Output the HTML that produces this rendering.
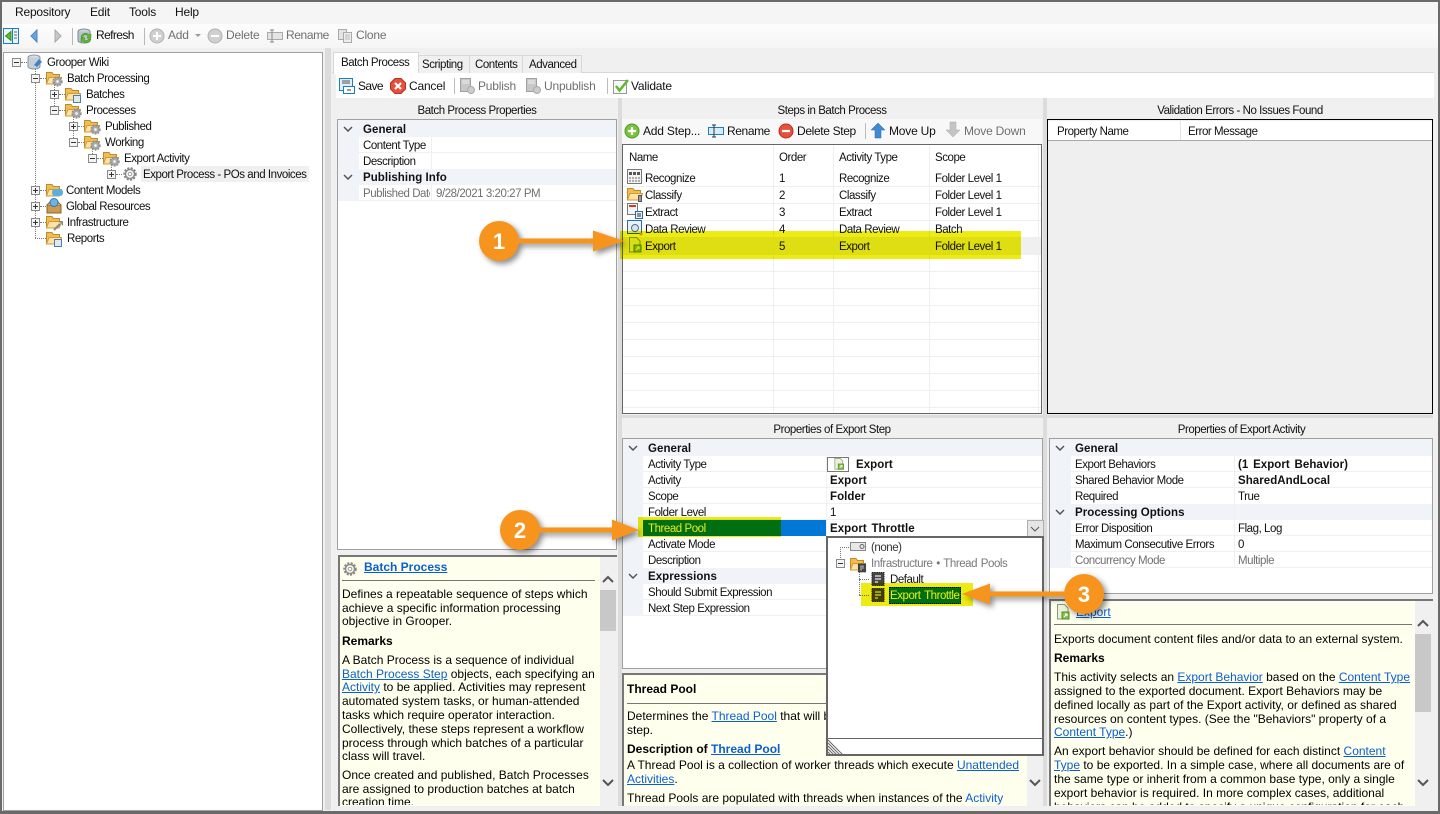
<!DOCTYPE html>
<html><head><meta charset="utf-8"><title>Grooper</title>
<style>
html,body{margin:0;padding:0;width:1440px;height:814px;overflow:hidden;background:#f0f0f0}
.t{position:absolute;white-space:nowrap;font:11.5px/16px "Liberation Sans",sans-serif;letter-spacing:-.45px;color:#111;margin-top:1px}
.t.b{letter-spacing:.05px}
.t.tb{font-size:12px;letter-spacing:-.2px;margin-top:0}
.m{position:absolute;white-space:nowrap;font:12px/14px "Liberation Sans",sans-serif;color:#000;margin-top:1px}
.m a,.a{color:#0a5fd0;text-decoration:underline}
.d{position:absolute}
.g{color:#707070}
.b{font-weight:bold}
svg.i{position:absolute;width:16px;height:16px;overflow:visible}
svg.e{position:absolute;width:9px;height:9px}
.vd{position:absolute;width:0;border-left:1px dotted #777}
.hd{position:absolute;height:0;border-top:1px dotted #777}
</style></head><body>
<svg width="0" height="0" style="position:absolute"><defs>
<symbol id="mn" viewBox="0 0 9 9"><rect x=".5" y=".5" width="8" height="8" fill="#f4f4f4" stroke="#8a8a8a"/><path d="M2 4.5h5" stroke="#333"/></symbol>
<symbol id="pl" viewBox="0 0 9 9"><rect x=".5" y=".5" width="8" height="8" fill="#f4f4f4" stroke="#8a8a8a"/><path d="M2 4.5h5M4.5 2v5" stroke="#333"/></symbol>
<symbol id="fo" viewBox="0 0 16 16"><path d="M.5 14V2.500h5.500l1.500 2h6v3H15.500L13 14z" fill="#f2bd4e" stroke="#c08a2c"/><path d="M3 7.500h12.500L13 14H.5z" fill="#fde4a4" stroke="#d09a3c"/></symbol>
<symbol id="gear" viewBox="0 0 16 16"><circle cx="8" cy="8" r="5.500" fill="none" stroke="#888" stroke-width="2.500" stroke-dasharray="2 1.300"/><circle cx="8" cy="8" r="4.500" fill="none" stroke="#8c8c8c" stroke-width="1.500"/><circle cx="8" cy="8" r="1.800" fill="#fff" stroke="#999"/></symbol>
<symbol id="gr" viewBox="0 0 16 16"><circle cx="8" cy="8" r="6" fill="#a4a4a4" stroke="#909090" stroke-width="3" stroke-dasharray="2.500 1.500"/><circle cx="8" cy="8" r="4.500" fill="#aaa"/><circle cx="8" cy="8" r="2" fill="#f2f2f2"/></symbol>
<symbol id="doc" viewBox="0 0 16 16"><path d="M2.500 .5h7l3.500 3.500v11h-10.500z" fill="#eaf2dc" stroke="#8a9a78"/><rect x="7" y="8" width="7" height="7" fill="#8cc152" stroke="#4f8a1e"/><path d="M9 13l3-3M10 10h2v2" stroke="#fff" fill="none"/></symbol>
<symbol id="dk" viewBox="0 0 16 16"><rect x="2" y="1.500" width="12" height="13" fill="#444" stroke="#222" stroke-dasharray="1.500 .7"/><path d="M5 5h6M5 8h6M5 11h3" stroke="#eee" stroke-width="1.200"/></symbol>
</defs></svg>

<!-- frame + chrome -->
<div class="d" style="left:0;top:0;width:1440px;height:24px;background:#f5f5f5"></div>
<div class="d" style="left:0;top:24px;width:1440px;height:24px;background:linear-gradient(#fdfdfd,#f5f5f5)"></div>
<div class="d" style="left:0;top:48px;width:331px;height:766px;background:#f0f0f0"></div>
<div class="d" style="left:325px;top:48px;width:6px;height:762px;background:#dcdcdc"></div>

<span class="t tb" style="left:15px;top:4px">Repository</span>
<span class="t tb" style="left:90px;top:4px">Edit</span>
<span class="t tb" style="left:129px;top:4px">Tools</span>
<span class="t tb" style="left:175px;top:4px">Help</span>

<!-- main toolbar -->
<svg class="i" style="left:3px;top:28px" viewBox="0 0 16 16"><rect x=".5" y=".5" width="15" height="15" fill="#e8f4fc" stroke="#1a7fc4"/><path d="M9.500 1v14" stroke="#1a7fc4"/><path d="M8 3.500L2.500 8 8 12.500z" fill="#5fb82e" stroke="#3c8c16"/><path d="M11 4h3M11 7h3M11 10h3" stroke="#666"/></svg>
<svg class="i" style="left:26px;top:28px" viewBox="0 0 16 16"><path d="M11 2L5 8l6 6z" fill="#6aa6dc" stroke="#4a86bc"/></svg>
<svg class="i" style="left:50px;top:28px" viewBox="0 0 16 16"><path d="M5 2l6 6-6 6z" fill="#c8c8c8" stroke="#a8a8a8"/></svg>
<div class="d" style="left:72px;top:28px;width:1px;height:17px;background:#b8b8b8"></div>
<svg class="i" style="left:77px;top:28px" viewBox="0 0 16 16"><ellipse cx="7" cy="3.500" rx="6" ry="2.500" fill="#cdd6de" stroke="#7f8a94"/><path d="M1 3.500v9c0 1.400 2.700 2.500 6 2.500s6-1.100 6-2.500v-9" fill="#b7c2cc" stroke="#7f8a94"/><path d="M4 9a4.500 4.500 0 0 1 8-2l2-1v4h-4l1-1.500A2.500 2.500 0 0 0 6 10zM14 11a4.500 4.500 0 0 1-8 2l-2 1v-4h4l-1 1.500A2.500 2.500 0 0 0 11.500 11z" fill="#5fb82e" stroke="#3c8c16" stroke-width=".5"/></svg>
<span class="t tb" style="left:96px;top:27px;letter-spacing:-.6px">Refresh</span>
<div class="d" style="left:144px;top:28px;width:1px;height:17px;background:#b8b8b8"></div>
<svg class="i" style="left:149px;top:28px" viewBox="0 0 16 16"><circle cx="8" cy="8" r="7" fill="#d0d0d0" stroke="#b0b0b0"/><path d="M8 4v8M4 8h8" stroke="#fff" stroke-width="2"/></svg>
<span class="t tb g" style="left:168px;top:27px">Add</span>
<svg class="d" style="left:195px;top:34px" width="7" height="4"><path d="M0 0h6L3 3z" fill="#999"/></svg>
<svg class="i" style="left:207px;top:28px" viewBox="0 0 16 16"><circle cx="8" cy="8" r="7" fill="#d0d0d0" stroke="#b0b0b0"/><path d="M4 8h8" stroke="#fff" stroke-width="2"/></svg>
<span class="t tb g" style="left:226px;top:27px">Delete</span>
<svg class="i" style="left:267px;top:28px" viewBox="0 0 16 16"><rect x=".5" y="4.500" width="15" height="7" fill="#e4e4e4" stroke="#aaa"/><path d="M5 2v12M3 2h4M3 14h4" stroke="#888" fill="none"/></svg>
<span class="t tb g" style="left:286px;top:27px;letter-spacing:-.4px">Rename</span>
<svg class="i" style="left:337px;top:28px" viewBox="0 0 16 16"><rect x="1.500" y="1.500" width="8" height="10" fill="#e4e4e4" stroke="#aaa"/><rect x="6.500" y="4.500" width="8" height="10" fill="#eee" stroke="#aaa"/><path d="M8 7h5M8 9h5M8 11h5" stroke="#bbb"/></svg>
<span class="t tb g" style="left:356px;top:27px">Clone</span>

<!-- tree panel -->
<div class="d" style="left:3px;top:52px;width:318px;height:757px;background:#fff;border:1px solid #a0a0a0"></div>
<div class="vd" style="left:35px;top:68px;height:170px"></div>
<div class="vd" style="left:54px;top:84px;height:26px"></div>
<div class="vd" style="left:73px;top:116px;height:26px"></div>
<div class="vd" style="left:92px;top:148px;height:10px"></div>
<div class="vd" style="left:111px;top:164px;height:10px"></div>
<div class="hd" style="left:21px;top:62px;width:6px"></div>
<div class="hd" style="left:40px;top:78px;width:6px"></div>
<div class="hd" style="left:59px;top:94px;width:6px"></div>
<div class="hd" style="left:59px;top:110px;width:6px"></div>
<div class="hd" style="left:78px;top:126px;width:6px"></div>
<div class="hd" style="left:78px;top:142px;width:6px"></div>
<div class="hd" style="left:97px;top:158px;width:6px"></div>
<div class="hd" style="left:116px;top:174px;width:6px"></div>
<div class="hd" style="left:40px;top:190px;width:6px"></div>
<div class="hd" style="left:40px;top:206px;width:6px"></div>
<div class="hd" style="left:40px;top:222px;width:6px"></div>
<div class="hd" style="left:35px;top:238px;width:11px"></div>
<svg class="e" style="left:12px;top:58px"><use href="#mn"/></svg>
<svg class="e" style="left:31px;top:74px"><use href="#mn"/></svg>
<svg class="e" style="left:50px;top:90px"><use href="#pl"/></svg>
<svg class="e" style="left:50px;top:106px"><use href="#mn"/></svg>
<svg class="e" style="left:69px;top:122px"><use href="#pl"/></svg>
<svg class="e" style="left:69px;top:138px"><use href="#mn"/></svg>
<svg class="e" style="left:88px;top:154px"><use href="#mn"/></svg>
<svg class="e" style="left:107px;top:170px"><use href="#pl"/></svg>
<svg class="e" style="left:31px;top:186px"><use href="#pl"/></svg>
<svg class="e" style="left:31px;top:202px"><use href="#pl"/></svg>
<svg class="e" style="left:31px;top:218px"><use href="#pl"/></svg>
<svg class="i" style="left:27px;top:54px" viewBox="0 0 16 16"><ellipse cx="7" cy="3.500" rx="6" ry="2.500" fill="#d8dee4" stroke="#8a949e"/><path d="M1 3.500v9c0 1.400 2.700 2.500 6 2.500s6-1.100 6-2.500v-9" fill="#c6ced6" stroke="#8a949e"/><path d="M7 11l5-6 3 3-5 5z" fill="#3f84c6"/></svg>
<svg class="i" style="left:46px;top:70px"><use href="#fo"/></svg><svg class="i" style="left:52px;top:76px;width:11px;height:11px"><use href="#gr"/></svg>
<svg class="i" style="left:65px;top:86px"><use href="#fo"/></svg><div class="d" style="left:73px;top:95px;width:8px;height:8px;background:#dfe9f3;border:1px solid #4a7fae;box-sizing:border-box"></div>
<svg class="i" style="left:65px;top:102px"><use href="#fo"/></svg><svg class="i" style="left:71px;top:108px;width:11px;height:11px"><use href="#gr"/></svg>
<svg class="i" style="left:84px;top:118px"><use href="#fo"/></svg><svg class="i" style="left:90px;top:124px;width:11px;height:11px"><use href="#gr"/></svg>
<svg class="i" style="left:84px;top:134px"><use href="#fo"/></svg><svg class="i" style="left:90px;top:140px;width:11px;height:11px"><use href="#gr"/></svg>
<svg class="i" style="left:103px;top:150px"><use href="#fo"/></svg><svg class="i" style="left:109px;top:156px;width:11px;height:11px"><use href="#gr"/></svg>
<div class="d" style="left:141px;top:166px;width:168px;height:16px;background:#f0f0f0"></div>
<svg class="i" style="left:122px;top:166px"><use href="#gear"/></svg>
<svg class="i" style="left:46px;top:182px"><use href="#fo"/></svg><div class="d" style="left:52px;top:189px;width:11px;height:7px;background:#5fb0d8;border-radius:3px"></div>
<svg class="i" style="left:46px;top:198px" viewBox="0 0 16 16"><rect x="1" y="7" width="14" height="8" fill="#c99a52" stroke="#8a6426"/><path d="M1 7l3-3h8l3 3" fill="#e0b878" stroke="#8a6426"/><circle cx="8" cy="4.500" r="4" fill="#6fb4e6" stroke="#2f78b4"/></svg>
<svg class="i" style="left:46px;top:214px"><use href="#fo"/></svg><svg class="d" style="left:53px;top:221px" width="10" height="10"><path d="M1 9l6-6M6 1a2 2 0 0 1 3 3" stroke="#888" stroke-width="2" fill="none"/></svg>
<svg class="i" style="left:46px;top:230px"><use href="#fo"/></svg><div class="d" style="left:54px;top:239px;width:8px;height:8px;background:#dfe9f3;border:1px solid #4a7fae;box-sizing:border-box"></div>
<span class="t" style="left:47px;top:54px">Grooper Wiki</span>
<span class="t" style="left:67px;top:70px">Batch Processing</span>
<span class="t" style="left:86px;top:86px">Batches</span>
<span class="t" style="left:86px;top:102px">Processes</span>
<span class="t" style="left:105px;top:118px">Published</span>
<span class="t" style="left:105px;top:134px">Working</span>
<span class="t" style="left:124px;top:150px">Export Activity</span>
<span class="t" style="left:143px;top:166px">Export Process - POs and Invoices</span>
<span class="t" style="left:66px;top:182px">Content Models</span>
<span class="t" style="left:66px;top:198px">Global Resources</span>
<span class="t" style="left:67px;top:214px">Infrastructure</span>
<span class="t" style="left:67px;top:230px">Reports</span>

<!-- tabs -->
<div class="d" style="left:332px;top:72px;width:1102px;height:1px;background:#d8d8d8"></div>
<div class="d" style="left:418px;top:55px;width:51px;height:17px;background:#f0f0f0;border:1px solid #d8d8d8;border-bottom:0"></div>
<div class="d" style="left:469px;top:55px;width:53px;height:17px;background:#f0f0f0;border:1px solid #d8d8d8;border-bottom:0"></div>
<div class="d" style="left:522px;top:55px;width:58px;height:17px;background:#f0f0f0;border:1px solid #d8d8d8;border-bottom:0"></div>
<div class="d" style="left:333px;top:52px;width:84px;height:21px;background:#fff;border:1px solid #d8d8d8;border-bottom:0"></div>
<span class="t" style="left:341px;top:54px">Batch Process</span>
<span class="t" style="left:422px;top:56px">Scripting</span>
<span class="t" style="left:475px;top:56px">Contents</span>
<span class="t" style="left:529px;top:56px">Advanced</span>

<!-- content toolbar -->
<div class="d" style="left:336px;top:73px;width:1098px;height:25px;background:#fff"></div>
<svg class="i" style="left:339px;top:78px" viewBox="0 0 16 16"><rect x=".5" y=".5" width="13" height="12" fill="#dff0fb" stroke="#1a7fc4"/><path d="M3 3h8M3 5h8" stroke="#555"/><rect x="4.500" y="8.500" width="11" height="7" fill="#fff" stroke="#1a7fc4"/><path d="M8 12h4" stroke="#333"/></svg>
<span class="t tb" style="left:358px;top:78px;letter-spacing:-.6px">Save</span>
<svg class="i" style="left:390px;top:78px" viewBox="0 0 16 16"><path d="M5 .5h6L15.500 5v6L11 15.500H5L.5 11V5z" fill="#e8503e" stroke="#b82d1e"/><path d="M5 5l6 6M11 5l-6 6" stroke="#fff" stroke-width="2.200"/></svg>
<span class="t tb" style="left:409px;top:78px">Cancel</span>
<div class="d" style="left:454px;top:78px;width:1px;height:16px;background:#bcbcbc"></div>
<svg class="i" style="left:459px;top:78px" viewBox="0 0 16 16"><rect x="1.500" y=".5" width="10" height="13" fill="#c8c8c8" stroke="#a0a0a0"/><path d="M3 3h7M3 5h7" stroke="#eee"/><circle cx="12" cy="12" r="3.500" fill="#ccc" stroke="#aaa"/></svg>
<span class="t tb g" style="left:478px;top:78px">Publish</span>
<svg class="i" style="left:525px;top:78px" viewBox="0 0 16 16"><rect x="1.500" y=".5" width="10" height="13" fill="#c8c8c8" stroke="#a0a0a0"/><path d="M3 3h7M3 5h7" stroke="#eee"/><circle cx="12" cy="12" r="3.500" fill="#ccc" stroke="#aaa"/></svg>
<span class="t tb g" style="left:544px;top:78px">Unpublish</span>
<div class="d" style="left:607px;top:78px;width:1px;height:16px;background:#bcbcbc"></div>
<svg class="i" style="left:613px;top:78px" viewBox="0 0 16 16"><rect x=".5" y="2.500" width="13" height="13" fill="#fafafa" stroke="#999"/><path d="M3 8l3.500 4.500L15 2" fill="none" stroke="#5fb82e" stroke-width="2.500"/></svg>
<span class="t tb" style="left:631px;top:78px">Validate</span>

<!-- splitter colors -->
<div class="d" style="left:618px;top:98px;width:4px;height:708px;background:#dcdcdc"></div>
<div class="d" style="left:1043px;top:98px;width:4px;height:708px;background:#dcdcdc"></div>
<div class="d" style="left:622px;top:415px;width:811px;height:3px;background:#dcdcdc"></div>

<!-- left properties -->
<span class="t" style="left:337px;top:102px;width:280px;text-align:center">Batch Process Properties</span>
<div class="d" style="left:337px;top:119px;width:278px;height:429px;background:#fff;border:1px solid #a0a0a0"></div>
<div class="d" style="left:338px;top:120px;width:21px;height:81px;background:#f0f4f9"></div>
<div class="d" style="left:338px;top:120px;width:278px;height:17px;background:#f0f4f9"></div>
<div class="d" style="left:338px;top:169px;width:278px;height:16px;background:#f0f4f9"></div>
<div class="d" style="left:359px;top:152px;width:257px;height:1px;background:#f0f0f0"></div>
<div class="d" style="left:359px;top:200px;width:257px;height:1px;background:#f0f0f0"></div>
<div class="d" style="left:431px;top:137px;width:1px;height:32px;background:#f0f0f0"></div>
<div class="d" style="left:431px;top:185px;width:1px;height:16px;background:#f0f0f0"></div>
<svg class="d" style="left:343px;top:126px" width="10" height="6"><path d="M1 1l4 4 4-4" fill="none" stroke="#555" stroke-width="1.500"/></svg>
<svg class="d" style="left:343px;top:174px" width="10" height="6"><path d="M1 1l4 4 4-4" fill="none" stroke="#555" stroke-width="1.500"/></svg>
<span class="t b" style="left:363px;top:121px">General</span>
<span class="t" style="left:363px;top:137px">Content Type</span>
<span class="t" style="left:363px;top:153px">Description</span>
<span class="t b" style="left:363px;top:169px">Publishing Info</span>
<span class="t g" style="left:363px;top:185px;width:67px;overflow:hidden">Published Date</span>
<span class="t g" style="left:436px;top:185px">9/28/2021 3:20:27 PM</span>

<!-- left help -->
<div class="d" style="left:338px;top:555px;width:279px;height:251px;background:#ffffee;border-top:2px solid #777;border-left:2px solid #777;box-sizing:border-box"></div>
<div class="d" style="left:600px;top:557px;width:17px;height:249px;background:#f0f0f0"></div>
<div class="d" style="left:600px;top:590px;width:16px;height:41px;background:#c8c8c8"></div>
<svg class="d" style="left:602px;top:575px" width="12" height="9"><path d="M1 7l5-5 5 5" fill="none" stroke="#555" stroke-width="2"/></svg>
<svg class="d" style="left:602px;top:778px" width="12" height="9"><path d="M1 2l5 5 5-5" fill="none" stroke="#555" stroke-width="2"/></svg>
<svg class="i" style="left:342px;top:561px"><use href="#gear"/></svg>
<span class="m b" style="left:364px;top:559px"><a>Batch Process</a></span>
<div class="d" style="left:342px;top:580px;width:253px;height:1px;background:#777"></div>
<span class="m" style="left:342px;top:586px">Defines a repeatable sequence of steps which</span>
<span class="m" style="left:342px;top:600px">achieve a specific information processing</span>
<span class="m" style="left:342px;top:613px">objective in Grooper.</span>
<span class="m b" style="left:342px;top:633px">Remarks</span>
<span class="m" style="left:342px;top:652px">A Batch Process is a sequence of individual</span>
<span class="m" style="left:342px;top:666px"><a>Batch Process Step</a> objects, each specifying an</span>
<span class="m" style="left:342px;top:679px"><a>Activity</a> to be applied. Activities may represent</span>
<span class="m" style="left:342px;top:693px">automated system tasks, or human-attended</span>
<span class="m" style="left:342px;top:707px">tasks which require operator interaction.</span>
<span class="m" style="left:342px;top:721px">Collectively, these steps represent a workflow</span>
<span class="m" style="left:342px;top:735px">process through which batches of a particular</span>
<span class="m" style="left:342px;top:748px">class will travel.</span>
<span class="m" style="left:342px;top:767px">Once created and published, Batch Processes</span>
<span class="m" style="left:342px;top:781px">are assigned to production batches at batch</span>
<span class="m" style="left:342px;top:794px;height:10px;overflow:hidden">creation time.</span>

<!-- steps -->
<span class="t" style="left:622px;top:102px;width:420px;text-align:center">Steps in Batch Process</span>
<div class="d" style="left:622px;top:119px;width:420px;height:25px;background:#f8f8f8"></div>
<svg class="i" style="left:624px;top:123px" viewBox="0 0 16 16"><circle cx="8" cy="8" r="7" fill="#7cc242" stroke="#4f9a1e"/><path d="M8 4v8M4 8h8" stroke="#fff" stroke-width="2.200"/></svg>
<span class="t tb" style="left:643px;top:123px">Add Step...</span>
<svg class="i" style="left:708px;top:123px" viewBox="0 0 16 16"><rect x=".5" y="4.500" width="15" height="7" fill="#d6ecfa" stroke="#1a7fc4"/><path d="M6 2v12M4 2h4M4 14h4" stroke="#333" fill="none"/></svg>
<span class="t tb" style="left:727px;top:123px;letter-spacing:-.4px">Rename</span>
<svg class="i" style="left:778px;top:123px" viewBox="0 0 16 16"><circle cx="8" cy="8" r="7" fill="#e8503e" stroke="#b82d1e"/><path d="M4 8h8" stroke="#fff" stroke-width="2.200"/></svg>
<span class="t tb" style="left:797px;top:123px;letter-spacing:-.35px">Delete Step</span>
<div class="d" style="left:865px;top:123px;width:1px;height:16px;background:#bcbcbc"></div>
<svg class="i" style="left:870px;top:122px" viewBox="0 0 16 16"><path d="M8 1l7 7h-4v8H5V8H1z" fill="#3f8ad0" stroke="#2a6aa6" stroke-width=".5"/></svg>
<span class="t tb" style="left:889px;top:123px">Move Up</span>
<svg class="i" style="left:945px;top:122px" viewBox="0 0 16 16"><path d="M8 15l7-7h-4V0H5v8H1z" fill="#c4c4c4" stroke="#aaa" stroke-width=".5"/></svg>
<span class="t tb g" style="left:964px;top:123px">Move Down</span>

<div class="d" style="left:622px;top:144px;width:418px;height:268px;background:#fff;border:1px solid #666"></div>
<div class="d" style="left:623px;top:237px;width:418px;height:17px;background:#f0f0f0"></div>
<div class="d" style="left:623px;top:186px;width:418px;height:1px;background:#efefef"></div>
<div class="d" style="left:623px;top:203px;width:418px;height:1px;background:#efefef"></div>
<div class="d" style="left:623px;top:220px;width:418px;height:1px;background:#efefef"></div>
<div class="d" style="left:623px;top:237px;width:418px;height:1px;background:#efefef"></div>
<div class="d" style="left:623px;top:254px;width:418px;height:1px;background:#efefef"></div>
<div class="d" style="left:623px;top:271px;width:418px;height:1px;background:#efefef"></div>
<div class="d" style="left:623px;top:288px;width:418px;height:1px;background:#efefef"></div>
<div class="d" style="left:623px;top:305px;width:418px;height:1px;background:#efefef"></div>
<div class="d" style="left:623px;top:322px;width:418px;height:1px;background:#efefef"></div>
<div class="d" style="left:623px;top:339px;width:418px;height:1px;background:#efefef"></div>
<div class="d" style="left:623px;top:356px;width:418px;height:1px;background:#efefef"></div>
<div class="d" style="left:623px;top:373px;width:418px;height:1px;background:#efefef"></div>
<div class="d" style="left:623px;top:390px;width:418px;height:1px;background:#efefef"></div>
<div class="d" style="left:623px;top:407px;width:418px;height:1px;background:#efefef"></div>
<div class="d" style="left:773px;top:145px;width:1px;height:268px;background:#efefef"></div>
<div class="d" style="left:833px;top:145px;width:1px;height:268px;background:#efefef"></div>
<div class="d" style="left:929px;top:145px;width:1px;height:268px;background:#efefef"></div>
<div class="d" style="left:1038px;top:145px;width:1px;height:268px;background:#efefef"></div>
<span class="t" style="left:629px;top:149px">Name</span><span class="t" style="left:779px;top:149px">Order</span><span class="t" style="left:839px;top:149px">Activity Type</span><span class="t" style="left:935px;top:149px">Scope</span>
<svg class="i" style="left:627px;top:169px" viewBox="0 0 16 16"><rect x=".5" y=".5" width="14" height="14" fill="#f4f4f4" stroke="#777"/><path d="M2 4.500h11" stroke="#555" stroke-width="3" stroke-dasharray="3 1"/><path d="M2 9h11M2 12h11" stroke="#666" stroke-dasharray="2 1"/></svg>
<span class="t" style="left:645px;top:170px">Recognize</span><span class="t" style="left:779px;top:170px">1</span><span class="t" style="left:839px;top:170px">Recognize</span><span class="t" style="left:935px;top:170px">Folder Level 1</span>
<svg class="i" style="left:627px;top:186px"><use href="#fo"/></svg><div class="d" style="left:638px;top:195px;width:4px;height:7px;background:#999;border:1px solid #555;box-sizing:border-box"></div>
<span class="t" style="left:645px;top:187px">Classify</span><span class="t" style="left:779px;top:187px">2</span><span class="t" style="left:839px;top:187px">Classify</span><span class="t" style="left:935px;top:187px">Folder Level 1</span>
<svg class="i" style="left:627px;top:203px" viewBox="0 0 16 16"><rect x=".5" y=".5" width="10" height="11" fill="#f4f4f4" stroke="#777"/><path d="M2 3h7" stroke="#d03a2a" stroke-width="2"/><rect x="8.500" y="8.500" width="7" height="7" fill="#e8f2fa" stroke="#2a6aa6"/><path d="M10 11h4M10 13h4" stroke="#333"/></svg>
<span class="t" style="left:645px;top:204px">Extract</span><span class="t" style="left:779px;top:204px">3</span><span class="t" style="left:839px;top:204px">Extract</span><span class="t" style="left:935px;top:204px">Folder Level 1</span>
<svg class="i" style="left:627px;top:220px" viewBox="0 0 16 16"><rect x=".5" y=".5" width="14" height="13" fill="#e8f2fa" stroke="#2a6aa6"/><circle cx="8" cy="8" r="3.500" fill="#cfe8f8" stroke="#668"/><circle cx="14" cy="14" r="1.500" fill="#e89a20"/></svg>
<span class="t" style="left:645px;top:221px">Data Review</span><span class="t" style="left:779px;top:221px">4</span><span class="t" style="left:839px;top:221px">Data Review</span><span class="t" style="left:935px;top:221px">Batch</span>
<svg class="i" style="left:627px;top:237px"><use href="#doc"/></svg>
<span class="t" style="left:645px;top:238px">Export</span><span class="t" style="left:779px;top:238px">5</span><span class="t" style="left:839px;top:238px">Export</span><span class="t" style="left:935px;top:238px">Folder Level 1</span>

<!-- validation -->
<span class="t" style="left:1047px;top:102px;width:386px;text-align:center">Validation Errors - No Issues Found</span>
<div class="d" style="left:1047px;top:119px;width:384px;height:293px;background:#efefef;border:1px solid #000"></div>
<div class="d" style="left:1048px;top:121px;width:384px;height:19px;background:#fff;border-bottom:1px solid #a8a8a8"></div>
<div class="d" style="left:1180px;top:121px;width:1px;height:19px;background:#e4e4e4"></div>
<span class="t" style="left:1057px;top:123px">Property Name</span>
<span class="t" style="left:1188px;top:123px">Error Message</span>

<!-- export step props -->
<span class="t" style="left:622px;top:421px;width:420px;text-align:center">Properties of Export Step</span>
<div class="d" style="left:622px;top:438px;width:419px;height:229px;background:#fff;border:1px solid #a0a0a0"></div>
<div class="d" style="left:623px;top:439px;width:20px;height:177px;background:#f0f4f9"></div>
<div class="d" style="left:623px;top:439px;width:419px;height:17px;background:#f0f4f9"></div>
<div class="d" style="left:623px;top:568px;width:419px;height:16px;background:#f0f4f9"></div>
<div class="d" style="left:643px;top:471px;width:399px;height:1px;background:#f0f0f0"></div>
<div class="d" style="left:643px;top:487px;width:399px;height:1px;background:#f0f0f0"></div>
<div class="d" style="left:643px;top:503px;width:399px;height:1px;background:#f0f0f0"></div>
<div class="d" style="left:643px;top:519px;width:399px;height:1px;background:#f0f0f0"></div>
<div class="d" style="left:643px;top:551px;width:399px;height:1px;background:#f0f0f0"></div>
<div class="d" style="left:643px;top:599px;width:399px;height:1px;background:#f0f0f0"></div>
<div class="d" style="left:643px;top:615px;width:399px;height:1px;background:#f0f0f0"></div>
<div class="d" style="left:826px;top:456px;width:1px;height:160px;background:#f0f0f0"></div>
<div class="d" style="left:643px;top:520px;width:183px;height:16px;background:#0078d7"></div>
<svg class="d" style="left:628px;top:445px" width="10" height="6"><path d="M1 1l4 4 4-4" fill="none" stroke="#555" stroke-width="1.500"/></svg>
<svg class="d" style="left:628px;top:573px" width="10" height="6"><path d="M1 1l4 4 4-4" fill="none" stroke="#555" stroke-width="1.500"/></svg>
<span class="t b" style="left:648px;top:440px">General</span>
<span class="t" style="left:648px;top:456px">Activity Type</span>
<span class="t" style="left:648px;top:472px">Activity</span>
<span class="t" style="left:648px;top:488px">Scope</span>
<span class="t" style="left:648px;top:504px">Folder Level</span>
<span class="t" style="left:648px;top:520px;color:#fff">Thread Pool</span>
<span class="t" style="left:648px;top:536px">Activate Mode</span>
<span class="t" style="left:648px;top:552px">Description</span>
<span class="t b" style="left:648px;top:568px">Expressions</span>
<span class="t" style="left:648px;top:584px">Should Submit Expression</span>
<span class="t" style="left:648px;top:600px">Next Step Expression</span>
<div class="d" style="left:827px;top:457px;width:20px;height:13px;background:#fff;border:1px solid #777"></div>
<svg class="d" style="left:833px;top:458px;width:12px;height:12px"><use href="#doc"/></svg>
<span class="t b" style="left:856px;top:456px">Export</span>
<span class="t b" style="left:830px;top:472px">Export</span>
<span class="t b" style="left:830px;top:488px">Folder</span>
<span class="t" style="left:830px;top:504px">1</span>
<span class="t b" style="left:830px;top:520px;word-spacing:1.500px">Export Throttle</span>
<div class="d" style="left:1027px;top:520px;width:15px;height:15px;background:#e5e5e5;border:1px solid #b0b0b0"></div>
<svg class="d" style="left:1030px;top:526px" width="10" height="6"><path d="M1 1l4 4 4-4" fill="none" stroke="#555"/></svg>

<!-- middle help -->
<div class="d" style="left:622px;top:673px;width:421px;height:133px;background:#ffffee;border-top:2px solid #777;border-left:2px solid #777;box-sizing:border-box"></div>
<div class="d" style="left:1027px;top:675px;width:16px;height:131px;background:#f0f0f0"></div>
<svg class="d" style="left:1029px;top:778px" width="12" height="9"><path d="M1 2l5 5 5-5" fill="none" stroke="#555" stroke-width="2"/></svg>
<span class="m b" style="left:627px;top:681px">Thread Pool</span>
<div class="d" style="left:627px;top:703px;width:395px;height:1px;background:#777"></div>
<span class="m" style="left:627px;top:708px">Determines the <a>Thread Pool</a> that will be used by this</span>
<span class="m" style="left:627px;top:722px">step.</span>
<span class="m b" style="left:627px;top:741px">Description of <a>Thread Pool</a></span>
<span class="m" style="left:627px;top:757px">A Thread Pool is a collection of worker threads which execute <a>Unattended</a></span>
<span class="m" style="left:627px;top:771px"><a>Activities</a>.</span>
<span class="m" style="left:627px;top:790px">Thread Pools are populated with threads when instances of the <span style="color:#0a5fd0">Activity</span></span>

<!-- dropdown -->
<div class="d" style="left:826px;top:536px;width:214px;height:216px;background:#fff;border:2px solid #666"></div>
<div class="d" style="left:828px;top:738px;width:214px;height:1px;background:#666"></div>
<svg class="d" style="left:828px;top:739px" width="17" height="15"><path d="M0 1l15 15M0 4l12 12M0 7l9 9M0 10l6 6M0 13l3 3" stroke="#666"/></svg>
<div class="vd" style="left:840px;top:547px;height:11px"></div>
<div class="hd" style="left:840px;top:547px;width:9px"></div>
<div class="vd" style="left:859px;top:572px;height:23px"></div>
<div class="hd" style="left:859px;top:579px;width:10px"></div>
<div class="hd" style="left:859px;top:595px;width:10px"></div>
<svg class="d" style="left:850px;top:542px" width="17" height="10"><rect x=".5" y=".5" width="15" height="8" fill="#e8e8e8" stroke="#888"/><circle cx="12" cy="4.500" r="2" fill="none" stroke="#666"/></svg>
<svg class="e" style="left:836px;top:559px"><use href="#mn"/></svg>
<svg class="i" style="left:850px;top:556px"><use href="#fo"/></svg>
<svg class="d" style="left:857px;top:563px;width:10px;height:10px"><use href="#dk"/></svg>
<span class="t" style="left:871px;top:539px;color:#333">(none)</span>
<span class="t" style="left:871px;top:555px;color:#787878;word-spacing:1px">Infrastructure • Thread Pools</span>
<svg class="i" style="left:870px;top:571px"><use href="#dk"/></svg>
<span class="t" style="left:890px;top:571px">Default</span>
<div class="d" style="left:889px;top:587px;width:70px;height:15px;background:#0078d7;border:1px dotted #000"></div>
<svg class="i" style="left:870px;top:587px"><use href="#dk"/></svg>
<span class="t" style="left:890px;top:587px;color:#fff;word-spacing:1px">Export Throttle</span>

<!-- export activity props -->
<span class="t" style="left:1049px;top:421px;width:385px;text-align:center">Properties of Export Activity</span>
<div class="d" style="left:1049px;top:438px;width:382px;height:154px;background:#fff;border:1px solid #a0a0a0"></div>
<div class="d" style="left:1050px;top:439px;width:21px;height:129px;background:#f0f4f9"></div>
<div class="d" style="left:1050px;top:439px;width:382px;height:17px;background:#f0f4f9"></div>
<div class="d" style="left:1050px;top:504px;width:382px;height:16px;background:#f0f4f9"></div>
<div class="d" style="left:1071px;top:471px;width:361px;height:1px;background:#f0f0f0"></div>
<div class="d" style="left:1071px;top:487px;width:361px;height:1px;background:#f0f0f0"></div>
<div class="d" style="left:1071px;top:535px;width:361px;height:1px;background:#f0f0f0"></div>
<div class="d" style="left:1071px;top:551px;width:361px;height:1px;background:#f0f0f0"></div>
<div class="d" style="left:1071px;top:567px;width:361px;height:1px;background:#f0f0f0"></div>
<div class="d" style="left:1234px;top:456px;width:1px;height:112px;background:#f0f0f0"></div>
<svg class="d" style="left:1055px;top:445px" width="10" height="6"><path d="M1 1l4 4 4-4" fill="none" stroke="#555" stroke-width="1.500"/></svg>
<svg class="d" style="left:1055px;top:509px" width="10" height="6"><path d="M1 1l4 4 4-4" fill="none" stroke="#555" stroke-width="1.500"/></svg>
<span class="t b" style="left:1075px;top:440px">General</span>
<span class="t" style="left:1075px;top:456px">Export Behaviors</span>
<span class="t" style="left:1075px;top:472px">Shared Behavior Mode</span>
<span class="t" style="left:1075px;top:488px">Required</span>
<span class="t b" style="left:1075px;top:504px">Processing Options</span>
<span class="t" style="left:1075px;top:520px">Error Disposition</span>
<span class="t" style="left:1075px;top:536px">Maximum Consecutive Errors</span>
<span class="t g" style="left:1075px;top:552px">Concurrency Mode</span>
<span class="t b" style="left:1238px;top:456px;word-spacing:1.500px">(1 Export Behavior)</span>
<span class="t b" style="left:1238px;top:472px">SharedAndLocal</span>
<span class="t" style="left:1238px;top:488px">True</span>
<span class="t" style="left:1238px;top:520px">Flag, Log</span>
<span class="t" style="left:1238px;top:536px">0</span>
<span class="t g" style="left:1238px;top:552px">Multiple</span>

<!-- right help -->
<div class="d" style="left:1049px;top:599px;width:384px;height:207px;background:#ffffee;border-top:2px solid #777;border-left:2px solid #777;box-sizing:border-box"></div>
<div class="d" style="left:1415px;top:601px;width:18px;height:205px;background:#f0f0f0"></div>
<div class="d" style="left:1415px;top:634px;width:16px;height:78px;background:#c8c8c8"></div>
<svg class="d" style="left:1417px;top:619px" width="12" height="9"><path d="M1 7l5-5 5 5" fill="none" stroke="#555" stroke-width="2"/></svg>
<svg class="d" style="left:1417px;top:778px" width="12" height="9"><path d="M1 2l5 5 5-5" fill="none" stroke="#555" stroke-width="2"/></svg>
<svg class="i" style="left:1055px;top:604px"><use href="#doc"/></svg>
<span class="m" style="left:1076px;top:604px"><a>Export</a></span>
<div class="d" style="left:1054px;top:624px;width:358px;height:1px;background:#777"></div>
<span class="m" style="left:1054px;top:631px">Exports document content files and/or data to an external system.</span>
<span class="m b" style="left:1054px;top:650px">Remarks</span>
<span class="m" style="left:1054px;top:669px">This activity selects an <a>Export Behavior</a> based on the <a>Content Type</a></span>
<span class="m" style="left:1054px;top:683px">assigned to the exported document. Export Behaviors may be</span>
<span class="m" style="left:1054px;top:697px">defined locally as part of the Export activity, or defined as shared</span>
<span class="m" style="left:1054px;top:711px">resources on content types. (See the "Behaviors" property of a</span>
<span class="m" style="left:1054px;top:724px"><a>Content Type</a>.)</span>
<span class="m" style="left:1054px;top:743px">An export behavior should be defined for each distinct <a>Content</a></span>
<span class="m" style="left:1054px;top:757px"><a>Type</a> to be exported. In a simple case, where all documents are of</span>
<span class="m" style="left:1054px;top:771px">the same type or inherit from a common base type, only a single</span>
<span class="m" style="left:1054px;top:785px">export behavior is required. In more complex cases, additional</span>
<span class="m" style="left:1054px;top:799px;height:5px;overflow:hidden">behaviors can be added to specify a unique configuration for each</span>

<!-- highlighters -->
<div class="d" style="left:620px;top:231px;width:401px;height:28px;background:#ecec14;mix-blend-mode:multiply"></div>
<div class="d" style="left:638px;top:517px;width:143px;height:20px;background:#ecec14;mix-blend-mode:multiply"></div>
<div class="d" style="left:861px;top:583px;width:112px;height:23px;background:#ecec14;mix-blend-mode:multiply"></div>

<!-- callouts -->
<svg class="d" style="left:0;top:0;filter:drop-shadow(3px 3px 3px rgba(0,0,0,.45))" width="1440" height="814">
<path d="M515 238.500h78v-8l31 10.500-31 10.500v-8h-78z" fill="#f7941d"/><circle cx="499" cy="241" r="20" fill="#f7941d"/>
<path d="M536 527.500h76v-8l27 10.500-27 10.500v-8h-76z" fill="#f7941d"/><circle cx="520" cy="530" r="20" fill="#f7941d"/>
<path d="M1068 591.500h-78v-8l-28 10.500 28 10.500v-8h78z" fill="#f7941d"/><circle cx="1084" cy="594" r="20" fill="#f7941d"/>
<text x="499" y="249" text-anchor="middle" font-family="Liberation Sans" font-weight="bold" font-size="22" fill="#fff">1</text>
<text x="520" y="538" text-anchor="middle" font-family="Liberation Sans" font-weight="bold" font-size="22" fill="#fff">2</text>
<text x="1084" y="602" text-anchor="middle" font-family="Liberation Sans" font-weight="bold" font-size="22" fill="#fff">3</text>
</svg>

<!-- outer frame -->
<div class="d" style="left:0;top:0;width:1440px;height:2px;background:#6a6a6a"></div>
<div class="d" style="left:0;top:0;width:2px;height:814px;background:#6a6a6a"></div>
<div class="d" style="left:1438px;top:0;width:2px;height:814px;background:#6a6a6a"></div>
<div class="d" style="left:0;top:811px;width:1440px;height:3px;background:#6a6a6a"></div>
</body></html>
